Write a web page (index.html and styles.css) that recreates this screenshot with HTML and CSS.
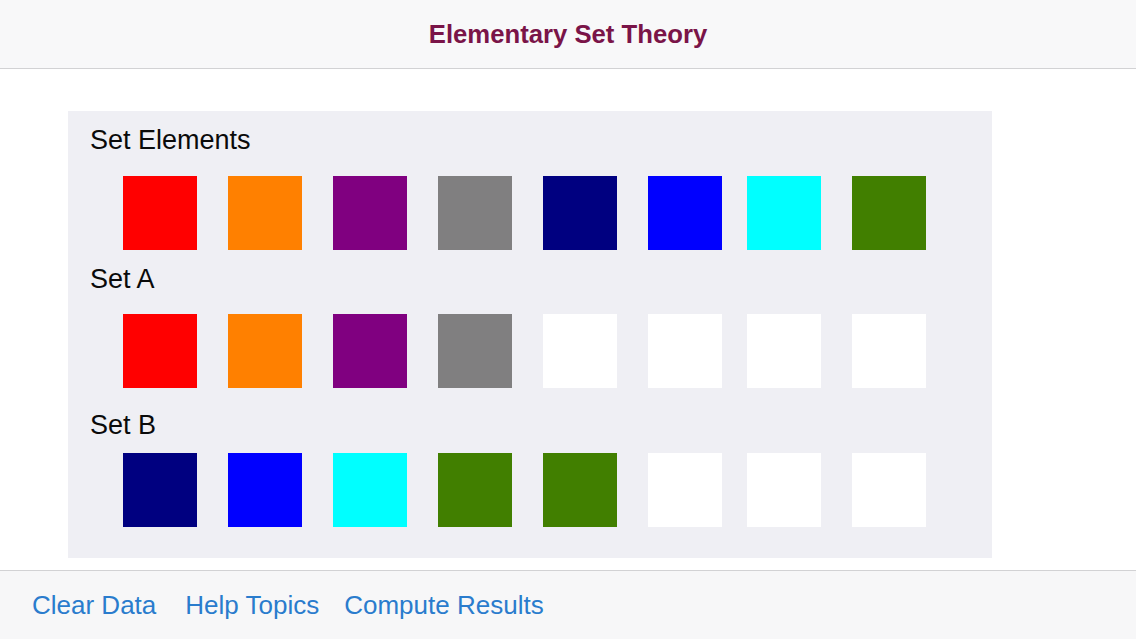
FILE: index.html
```html
<!DOCTYPE html>
<html lang="en">
	<head>
		<title>Elementary Set Theory</title>
		<meta charset="UTF-8">
		<link rel="stylesheet" href="styles.css">
	</head>
	<body>
		<div class="topBar">
			<h1>Elementary Set Theory</h1>
		</div>
		<div class="content">
			<div class="setPanel">
				<p class="setLabel first">Set Elements</p>
				<div class="setRow rowElements">
					<span class="element red"></span>
					<span class="element orange"></span>
					<span class="element purple"></span>
					<span class="element gray"></span>
					<span class="element navy"></span>
					<span class="element blue"></span>
					<span class="element cyan"></span>
					<span class="element green"></span>
				</div>

				<p class="setLabel labelA">Set A</p>
				<div class="setRow rowA">
					<span class="element red"></span>
					<span class="element orange"></span>
					<span class="element purple"></span>
					<span class="element gray"></span>
					<span class="element empty"></span>
					<span class="element empty"></span>
					<span class="element empty"></span>
					<span class="element empty"></span>
				</div>

				<p class="setLabel labelB">Set B</p>
				<div class="setRow rowB">
					<span class="element navy"></span>
					<span class="element blue"></span>
					<span class="element cyan"></span>
					<span class="element green"></span>
					<span class="element green"></span>
					<span class="element empty"></span>
					<span class="element empty"></span>
					<span class="element empty"></span>
				</div>
			</div>
		</div>
		<div class="bottomBar">
			<a href="#" class="barButton clear">Clear Data</a>
			<a href="#" class="barButton help">Help Topics</a>
			<a href="#" class="barButton compute">Compute Results</a>
		</div>
	</body>
</html>
```

FILE: styles.css
```css
* {
	box-sizing : border-box;
}
html, body {
	margin : 0;
	padding : 0;
	height : 100%;
}
body {
	font-family : "Liberation Sans", Arial, sans-serif;
	background-color : white;
	display : flex;
	flex-direction : column;
}
h1, p {
	margin : 0;
	padding : 0;
}

.topBar {
	height : 69px;
	padding-top : 19px;
	background-color : #f8f8f9;
	border-bottom : 1px solid #d2d2d4;
}
h1 {
	font-size : 25.7px;
	line-height : 30px;
	font-weight : bold;
	color : #7a1448;
	text-align : center;
}

.content {
	flex : 1;
	padding : 42px 0 0 68px;
}
.setPanel {
	width : 924px;
	height : 447px;
	background-color : #efeff4;
	padding : 13px 0 0 22px;
}
.setLabel {
	font-size : 27px;
	line-height : 32px;
	color : #0a0a0a;
}
.labelA {
	margin-top : 13px;
}
.labelB {
	margin-top : 21px;
}
.setRow {
	display : flex;
	gap : 31px;
	margin-left : 33px;
}
.rowElements {
	margin-top : 20px;
}
.rowA {
	margin-top : 19px;
}
.rowB {
	margin-top : 12px;
}
.element {
	display : block;
	width : 74px;
	height : 74px;
}
.element:nth-child(7) {
	margin-left : -6px;
}
.red { background-color : #ff0000; }
.orange { background-color : #ff8000; }
.purple { background-color : #800080; }
.gray { background-color : #807f80; }
.navy { background-color : #000080; }
.blue { background-color : #0000ff; }
.cyan { background-color : #00ffff; }
.green { background-color : #417f00; }
.empty { background-color : #ffffff; }

.bottomBar {
	height : 69px;
	border-top : 1px solid #d2d2d4;
	background-color : #f7f7f8;
	padding : 19px 0 0 32px;
	display : flex;
	align-items : flex-start;
}
.barButton {
	font-size : 26px;
	line-height : 30px;
	color : #2a7ccd;
	text-decoration : none;
}
.help {
	margin-left : 29px;
}
.compute {
	margin-left : 25px;
}
```
